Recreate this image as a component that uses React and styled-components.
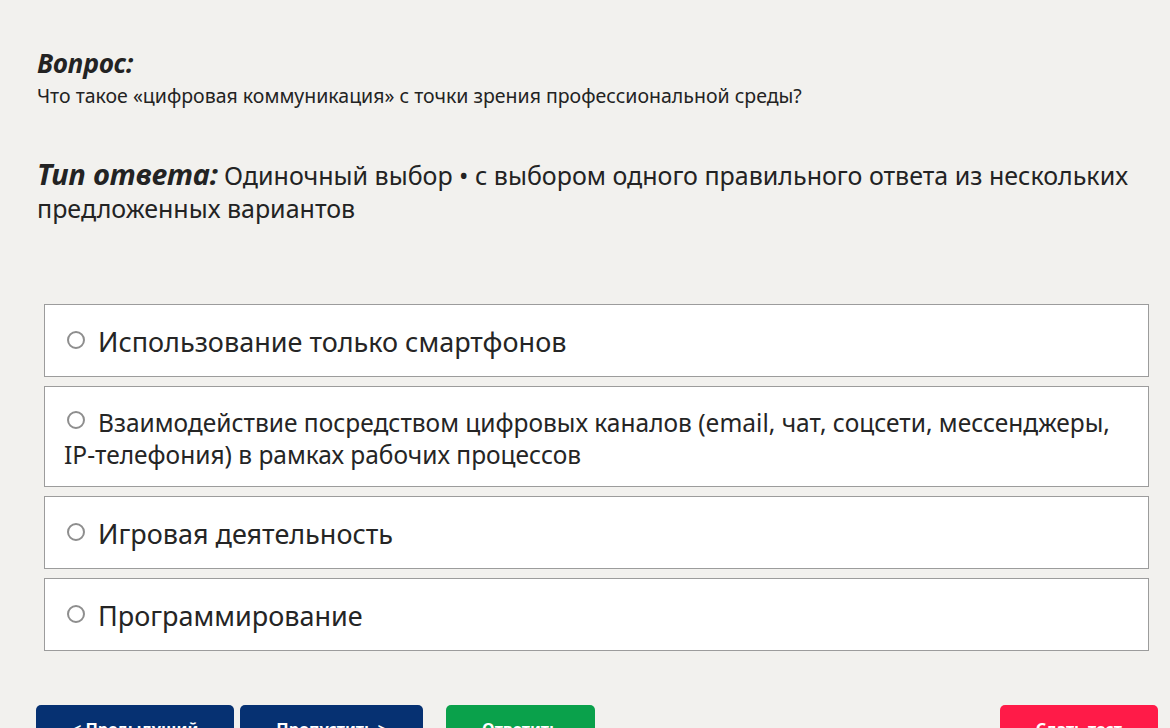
import React from "react";
import styled, { createGlobalStyle } from "styled-components";

const options = [
  { text: "Использование только смартфонов", size: "lg" },
  {
    text: "Взаимодействие посредством цифровых каналов (email, чат, соцсети, мессенджеры, IP\u2011телефония) в рамках рабочих процессов",
    size: "md",
  },
  { text: "Игровая деятельность", size: "lg" },
  { text: "Программирование", size: "lg" },
];

export default function App() {
  return (
    <>
      <GlobalStyle />
      <Page>
        <Heading>Вопрос:</Heading>
        <Question>
          Что такое «цифровая коммуникация» с точки зрения профессиональной среды?
        </Question>

        <AnswerType>
          <TypeLabel>Тип ответа:</TypeLabel>Одиночный выбор • с выбором одного
          правильного ответа из нескольких предложенных вариантов
        </AnswerType>

        <OptionList>
          {options.map((o) => (
            <Option key={o.text} $size={o.size}>
              <Radio />
              {o.text}
            </Option>
          ))}
        </OptionList>

        <Toolbar>
          <Button $tone="navy">&lt; Предыдущий</Button>
          <Button $tone="navy">Пропустить &gt;</Button>
          <Button $tone="green" $gap="23px">
            Ответить
          </Button>
          <Spacer />
          <Button $tone="red">Сдать тест</Button>
        </Toolbar>
      </Page>
    </>
  );
}

const GlobalStyle = createGlobalStyle`
  body {
    margin: 0;
    background: #f2f1ee;
    font-family: "Noto Sans", "Open Sans", sans-serif;
    color: #232323;
  }
`;

const Page = styled.main`
  padding: 47px 12px 0 36px;
  height: 728px;
  box-sizing: border-box;
  overflow: hidden;
`;

const Heading = styled.h2`
  margin: 0;
  font-size: 26px;
  line-height: 32px;
  font-weight: 700;
  font-style: italic;
  padding-left: 1px;
`;

const Question = styled.p`
  margin: 4px 0 0 1px;
  font-size: 19.5px;
  line-height: 26px;
`;

const AnswerType = styled.p`
  margin: 48px 0 0 1px;
  font-size: 25px;
  line-height: 33px;
`;

const TypeLabel = styled.b`
  font-size: 29px;
  font-style: italic;
  margin-right: 6px;
`;

const OptionList = styled.div`
  display: flex;
  flex-direction: column;
  gap: 9px;
  margin: 79px 9px 0 8px;
`;

const Option = styled.label`
  display: block;
  background: #fff;
  border: 1px solid #9c9c9c;
  padding: ${(p) => (p.$size === "lg" ? "19px 12px 17px 19px" : "20px 12px 15px 19px")};
  font-size: ${(p) => (p.$size === "lg" ? "27px" : "24.5px")};
  line-height: ${(p) => (p.$size === "lg" ? "35px" : "32px")};
  color: #252525;
`;

const Radio = styled.span`
  display: inline-block;
  width: 14px;
  height: 14px;
  border: 2px solid #8e8e8e;
  border-radius: 50%;
  margin: 0 13px 0 3px;
  vertical-align: 3px;
  background: #fff;
`;

const Toolbar = styled.div`
  display: flex;
  margin-top: 54px;
`;

const Spacer = styled.div`
  flex: 1;
`;

const tones = {
  navy: "#063172",
  green: "#0aa14b",
  red: "#ff1b48",
};

const Button = styled.button`
  all: unset;
  box-sizing: border-box;
  height: 44px;
  padding: 3px 36px 0;
  margin-left: ${(p) => p.$gap || "6px"};
  &:first-child {
    margin-left: 0;
  }
  border-radius: 5px;
  background: ${(p) => tones[p.$tone]};
  color: #fff;
  font-family: "Noto Sans", "Open Sans", sans-serif;
  font-weight: 700;
  font-size: 16.2px;
  line-height: 22px;
`;
